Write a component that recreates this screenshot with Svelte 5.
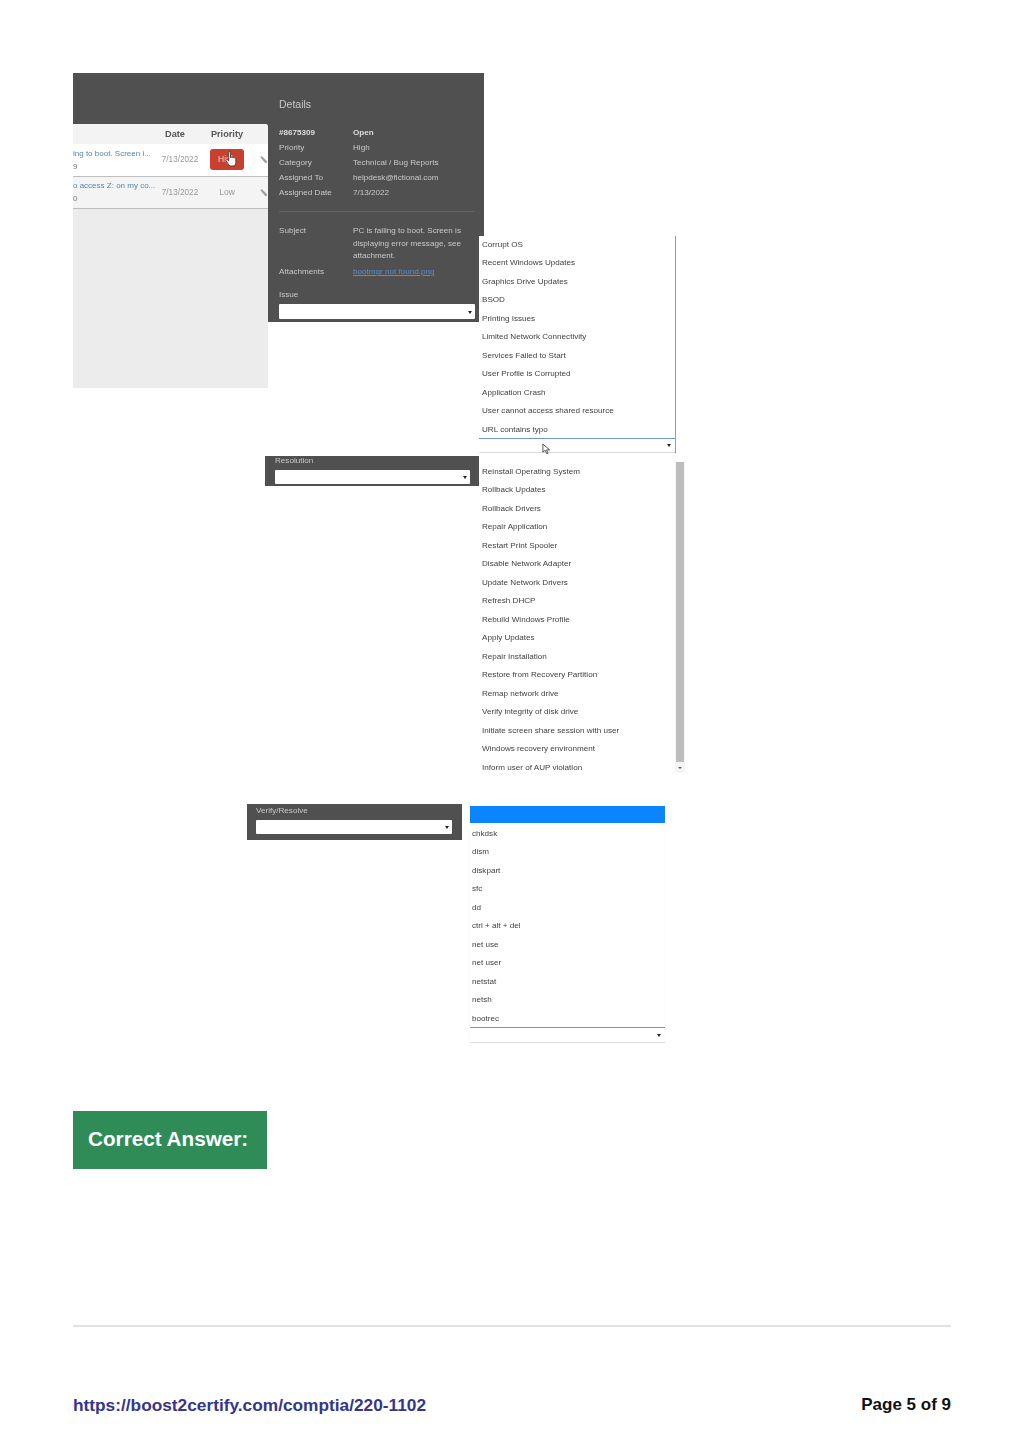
<script>
    const details = [
        ["Priority", "High"],
        ["Category", "Technical / Bug Reports"],
        ["Assigned To", "helpdesk@fictional.com"],
        ["Assigned Date", "7/13/2022"],
    ];
    // the pasted screenshot is cropped on its left side, so only the visible part is here
    const tickets = [
        { title: "ing to boot. Screen i...", id: "9", priority: "High", active: true },
        { title: "o access Z: on my co...", id: "0", priority: "Low", active: false },
    ];
    const issues = [
        "Corrupt OS",
        "Recent Windows Updates",
        "Graphics Drive Updates",
        "BSOD",
        "Printing Issues",
        "Limited Network Connectivity",
        "Services Failed to Start",
        "User Profile is Corrupted",
        "Application Crash",
        "User cannot access shared resource",
        "URL contains typo",
    ];
    const resolutions = [
        "Reinstall Operating System",
        "Rollback Updates",
        "Rollback Drivers",
        "Repair Application",
        "Restart Print Spooler",
        "Disable Network Adapter",
        "Update Network Drivers",
        "Refresh DHCP",
        "Rebuild Windows Profile",
        "Apply Updates",
        "Repair Installation",
        "Restore from Recovery Partition",
        "Remap network drive",
        "Verify integrity of disk drive",
        "Initiate screen share session with user",
        "Windows recovery environment",
        "Inform user of AUP violation",
    ];
    const commands = [
        "chkdsk",
        "dism",
        "diskpart",
        "sfc",
        "dd",
        "ctrl + alt + del",
        "net use",
        "net user",
        "netstat",
        "netsh",
        "bootrec",
    ];
</script>

<main class="page">
    <section class="canvas">
        <div class="shot ticket">
            <div class="table">
                <div class="table-head">
                    <span></span>
                    <b class="head-date">Date</b>
                    <b>Priority</b>
                    <span></span>
                </div>
                {#each tickets as t}
                    <div class="table-row" class:active={t.active}>
                        <div class="cell-title">
                            <span class="title">{t.title}</span>
                            <span class="id">{t.id}</span>
                        </div>
                        <span class="date">7/13/2022</span>
                        <span class="prio" class:high={t.active}>{t.priority}</span>
                        <svg class="clip" viewBox="0 0 10 10" width="9" height="9">
                            <path d="M1.500 2.500 L3 1 L8.500 6.500 L9 9 L6.500 8.500 Z" fill="#a0a0a0" />
                        </svg>
                    </div>
                {/each}
                <svg class="hand" viewBox="0 0 14 18" width="13" height="17">
                    <path
                        d="M4 1.500c0-1.200 2-1.200 2 0V7c.4-.9 1.900-.8 2 .2.4-.8 1.800-.7 1.900.3.500-.6 1.800-.4 1.800.7v4.300c0 2-1 3.500-3 3.500H6.500c-1.500 0-2-.8-2.800-2L1.200 10.500c-.7-1.100.7-2.100 1.600-1.100L4 10.500z"
                        fill="#f6f6f6"
                        stroke="#333"
                        stroke-width="0.9"
                    />
                </svg>
            </div>
            <div class="details">
                <h2>Details</h2>
                <dl class="facts">
                    <dt><b>#8675309</b></dt>
                    <dd><b>Open</b></dd>
                    {#each details as d}
                        <dt>{d[0]}</dt>
                        <dd>{d[1]}</dd>
                    {/each}
                </dl>
                <hr />
                <dl class="facts subject">
                    <dt>Subject</dt>
                    <dd class="wrap">PC is failing to boot. Screen is displaying error message, see attachment.</dd>
                    <dt>Attachments</dt>
                    <dd><span class="link">bootmgr not found.png</span></dd>
                </dl>
                <div class="label">Issue</div>
                <div class="select"><i></i></div>
            </div>
        </div>

        <div class="shot list issues">
            <ul>
                {#each issues as item}<li>{item}</li>{/each}
            </ul>
            <div class="list-select"><i></i></div>
            <svg class="pointer" viewBox="0 0 10 13" width="9" height="12">
                <path d="M1 1v9l2.500-2 1.800 3.800 1.500-.7L5 7.500h3.500z" fill="#fff" stroke="#333" stroke-width="0.9" />
            </svg>
        </div>

        <div class="shot bar resolution">
            <div class="label">Resolution</div>
            <div class="select"><i></i></div>
        </div>

        <div class="shot list resolutions">
            <ul>
                {#each resolutions as item}<li>{item}</li>{/each}
            </ul>
            <div class="scrollbar">
                <div class="thumb"></div>
                <div class="arrow"></div>
            </div>
        </div>

        <div class="shot bar verify">
            <div class="label">Verify/Resolve</div>
            <div class="select"><i></i></div>
        </div>

        <div class="shot list commands">
            <div class="selected"></div>
            <ul>
                {#each commands as item}<li>{item}</li>{/each}
            </ul>
            <div class="list-select"><i></i></div>
        </div>
    </section>

    <div class="answer">Correct Answer:</div>

    <hr class="rule" />

    <footer>
        <span class="url">https://boost2certify.com/comptia/220-1102</span>
        <span class="pageno">Page 5 of 9</span>
    </footer>
</main>

<style>
    :global(body) {
        margin: 0;
        background: #fff;
    }
    .page {
        width: 1024px;
        height: 1448px;
        box-sizing: border-box;
        padding: 73px 73px 0;
        font-family: "Liberation Sans", Arial, sans-serif;
        overflow: hidden;
    }

    /* pasted screenshots sit on a free canvas */
    .canvas {
        position: relative;
        height: 1038px;
        margin-left: -73px;
    }
    .shot {
        position: absolute;
        font-size: 8.1px;
        filter: blur(0.4px);
        color: #3f3f3f;
    }

    .ticket {
        left: 73px;
        top: 0;
        width: 411px;
        height: 249px;
        background: #505050;
        display: flex;
    }
    .table {
        position: relative;
        flex: 0 0 195px;
        height: 264px;
        margin-top: 51px;
        background: #ececec;
        border-top-right-radius: 3px;
        overflow: hidden;
    }
    .table-head,
    .table-row {
        display: grid;
        grid-template-columns: 84px 46px 48px 17px;
        align-items: center;
    }
    .table-head {
        height: 20px;
        background: #f3f3f3;
        font-size: 9.200px;
        color: #555;
        text-align: center;
    }
    .head-date {
        padding-right: 10px;
    }
    .table-row {
        height: 32.500px;
        background: #f4f4f4;
        border-bottom: 1px solid #bdbdbd;
        box-sizing: border-box;
    }
    .table-row.active {
        background: #fff;
    }
    .cell-title {
        display: flex;
        flex-direction: column;
        gap: 4px;
    }
    .title {
        color: #5a83a8;
        white-space: nowrap;
        font-size: 8px;
    }
    .id {
        color: #777;
    }
    .date {
        justify-self: center;
        color: #999;
        font-size: 8.200px;
        white-space: nowrap;
    }
    .prio {
        justify-self: center;
        color: #999;
        font-size: 8.500px;
    }
    .prio.high {
        width: 34px;
        height: 21px;
        line-height: 21px;
        box-sizing: border-box;
        padding-left: 8px;
        background: #c8402f;
        border-radius: 3px;
        color: #f3c9c2;
    }
    .clip {
        justify-self: end;
    }
    .hand {
        position: absolute;
        left: 152px;
        top: 27px;
    }

    .details {
        flex: 1;
        padding: 25px 9px 0 11px;
        color: #c9c9c9;
    }
    h2 {
        margin: 0 0 15px;
        font-size: 10.500px;
        font-weight: normal;
        line-height: 12px;
    }
    .facts {
        display: grid;
        grid-template-columns: 74px 1fr;
        grid-auto-rows: 15px;
        margin: 0;
        line-height: 15px;
        white-space: nowrap;
    }
    .facts dt,
    .facts dd {
        margin: 0;
    }
    .facts b {
        color: #ddd;
    }
    .details hr {
        border: 0;
        border-top: 1px solid #666;
        margin: 11px 0 13px;
    }
    .facts.subject {
        grid-auto-rows: auto;
    }
    .facts .wrap {
        white-space: normal;
        line-height: 12.700px;
        padding-bottom: 1px;
    }
    .subject dt:first-child {
        line-height: 12.700px;
    }
    .link {
        color: #5a8fd0;
        text-decoration: underline;
    }
    .label {
        color: #c9c9c9;
        font-size: 8.100px;
        line-height: 10px;
    }
    .details .label {
        margin-top: 11px;
        margin-bottom: 4px;
    }
    .select {
        height: 15px;
        background: #fff;
        border-radius: 1px;
        position: relative;
    }
    .select i,
    .list-select i {
        position: absolute;
        right: 4px;
        top: 50%;
        margin-top: -1px;
        border: 2px solid transparent;
        border-top: 3px solid #222;
        border-bottom: 0;
    }
    .select i {
        right: 3px;
    }

    .list ul {
        margin: 0;
        padding: 0;
        list-style: none;
    }
    .list li {
        height: 18.500px;
        line-height: 18.500px;
        padding-left: 3px;
        white-space: nowrap;
    }
    .list-select {
        position: relative;
        height: 15px;
        border-top: 1px solid #6f93cf;
        border-bottom: 1px solid #ddd;
        box-sizing: border-box;
    }

    .issues {
        left: 479px;
        top: 163px;
        width: 196px;
        height: 217px;
        background: #fff;
        border-right: 1px solid #7d9ed4;
    }
    .issues ul {
        height: 202px;
        margin-top: -0.500px;
    }
    .pointer {
        position: absolute;
        left: 63px;
        top: 207px;
    }

    .bar {
        background: #505050;
        box-sizing: border-box;
    }
    .resolution {
        left: 265px;
        top: 383px;
        width: 214px;
        height: 30px;
        padding: 0 9px 0 10px;
    }
    .resolution .label {
        margin-bottom: 4px;
    }
    .verify {
        left: 247px;
        top: 731px;
        width: 215px;
        height: 36px;
        padding: 2px 10px 0 9px;
    }
    .verify .label {
        margin-bottom: 4px;
    }
    .verify .select,
    .resolution .select {
        height: 14px;
    }

    .resolutions {
        left: 479px;
        top: 389px;
        width: 206px;
        height: 311px;
        display: flex;
        justify-content: space-between;
    }
    .resolutions ul {
        padding-top: 0.700px;
    }
    .scrollbar {
        width: 10px;
        height: 100%;
        background: #f6f6f6;
        display: flex;
        flex-direction: column;
    }
    .thumb {
        flex: 1;
        margin: 0 1px;
        background: #bdbdbd;
    }
    .arrow {
        height: 11px;
        position: relative;
    }
    .arrow::after {
        content: "";
        position: absolute;
        left: 3px;
        top: 5px;
        border: 2px solid transparent;
        border-top: 2px solid #555;
        border-bottom: 0;
    }

    .commands {
        left: 470px;
        top: 733px;
        width: 195px;
        height: 237px;
        box-shadow: 0 0 1px #e4e4e4;
    }
    .selected {
        height: 17px;
        background: #0a84ff;
    }
    .commands ul {
        height: 204px;
        padding-top: 1.500px;
        box-sizing: border-box;
    }
    .commands li {
        padding-left: 2px;
    }
    .commands .list-select {
        height: 16px;
    }

    .answer {
        width: 194px;
        height: 58px;
        box-sizing: border-box;
        padding-left: 15px;
        line-height: 56px;
        background: #2f8c57;
        color: #fff;
        font-size: 20.700px;
        font-weight: bold;
        white-space: nowrap;
    }
    .rule {
        border: 0;
        border-top: 2px solid #e2e2e2;
        margin: 156px 0 0;
    }
    footer {
        display: flex;
        justify-content: space-between;
        margin-top: 68px;
        font-size: 17.300px;
        font-weight: bold;
        line-height: 20px;
    }
    .url {
        color: #35358c;
    }
    .pageno {
        color: #111;
        font-size: 17px;
    }
</style>
